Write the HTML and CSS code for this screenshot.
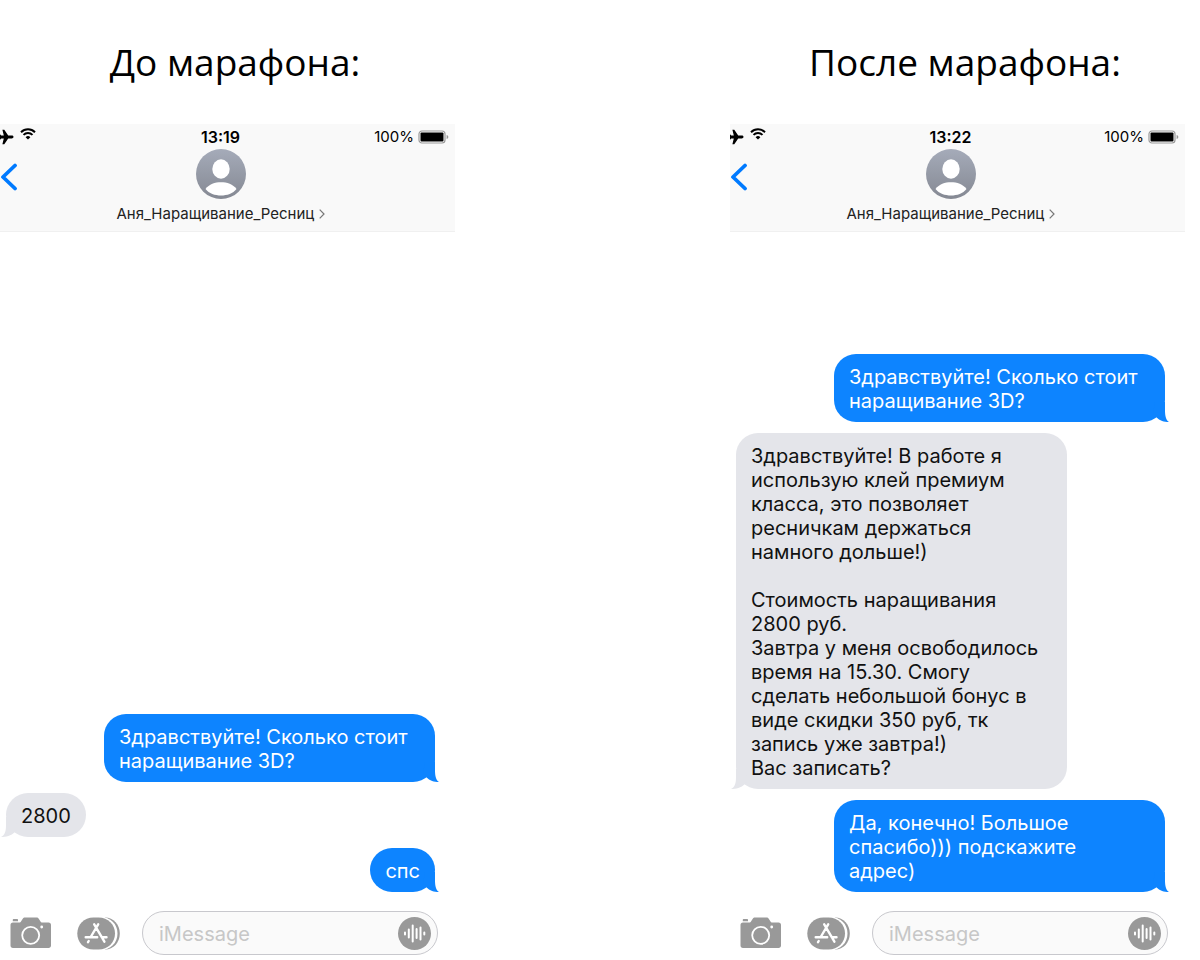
FILE: index.html
```html
<!DOCTYPE html>
<html lang="ru">
<head>
    <meta charset="UTF-8">
    <meta name="viewport" content="width=device-width, initial-scale=1.0">
    <title>До и после марафона</title>
    <link rel="stylesheet" href="styles.css">
</head>
<body>
    <!-- Общие иконки -->
    <svg class="icons" aria-hidden="true">
        <symbol id="icon-plane" viewBox="0 0 16 16">
            <path d="M15.500 8c0-.9-.8-1.400-1.800-1.400H10.200L6.300.8H4.400l1.400 5.800H3.200L1.600 4.800H0L1.200 8 0 11.200h1.600l1.600-1.800h2.600l-1.400 5.800h1.900l3.900-5.800h3.500c1 0 1.800-.5 1.800-1.400z"/>
        </symbol>
        <symbol id="icon-wifi" viewBox="0 0 16 12">
            <path d="M1 4.200a10 10 0 0 1 14 0M3.500 6.900a6.400 6.400 0 0 1 9 0" fill="none" stroke="#000" stroke-width="2"/>
            <path d="M8 11.600 5.600 9.200a3.400 3.400 0 0 1 4.800 0z"/>
        </symbol>
        <symbol id="icon-battery" viewBox="0 0 31 14">
            <rect x="1" y="1" width="26" height="12" rx="3" fill="#fff" stroke="#999" stroke-width="1.200"/>
            <rect x="2.500" y="2.500" width="23" height="9" rx="1"/>
            <path d="M28.600 5v4c1-.3 1.700-1 1.700-2s-.7-1.700-1.700-2z" fill="#999"/>
        </symbol>
        <symbol id="icon-back" viewBox="0 0 18 28">
            <path d="M15 2.500 3 14l12 11.500" fill="none" stroke="#007aff" stroke-width="3.800" stroke-linecap="round" stroke-linejoin="round"/>
        </symbol>
        <linearGradient id="avatar-fill" x2="0" y2="1">
            <stop offset="0" stop-color="#a5abb9"/>
            <stop offset="1" stop-color="#858993"/>
        </linearGradient>
        <symbol id="icon-avatar" viewBox="0 0 50 50">
            <circle cx="25" cy="25" r="25" fill="url(#avatar-fill)"/>
            <ellipse cx="25" cy="20" rx="8.700" ry="9.700" fill="#fff"/>
            <path d="M9.500 40C13 35 19 33.200 25 33.200S37 35 40.500 40C37 44.500 31 46.500 25 46.500S13 44.500 9.500 40z" fill="#fff"/>
        </symbol>
        <symbol id="icon-more" viewBox="0 0 6 10">
            <path d="M.7.700 5 5 .7 9.300" fill="none" stroke="#777" stroke-width="1.200"/>
        </symbol>
        <symbol id="icon-camera" viewBox="0 0 42 32">
            <path d="M3.500 2h3.800q.7 0 .7.700v1.500H2.800V2.700Q2.800 2 3.500 2zM3 5.500h6c1.300 0 1.600-.5 2.300-1.600l1.300-2C13.300.8 14 .5 15 .5h11.500c1 0 1.700.3 2.400 1.400l1.300 2c.7 1.100 1 1.600 2.300 1.600H38.500c1.600 0 2.500.9 2.500 2.500v20.500c0 1.600-.9 2.500-2.500 2.500H3C1.400 31 .5 30.100.5 28.500V8C.5 6.400 1.400 5.500 3 5.500z" fill="#999"/>
            <circle cx="20.700" cy="18.300" r="8.500" fill="none" stroke="#fff" stroke-width="1.800"/>
            <circle cx="31.700" cy="10" r="1.400" fill="#fff"/>
        </symbol>
        <symbol id="icon-apps" viewBox="0 0 43 33">
            <path d="M28 .5c8.500 0 14.800 7 14.800 16S36.500 32.500 28 32.500z" fill="#999"/>
            <path d="M24 0c9.300 0 16.500 7 16.500 16.500S33.300 33 24 33z" fill="#fff"/>
            <path d="M16.500.5h5C31 .5 38 7.500 38 16.500s-7 16-16.500 16h-5C7 32.500.3 25.500.3 16.500S7 .5 16.500.5z" fill="#999"/>
            <path d="M17.200 7.300 27.400 24.700M21.200 7.300 13.700 20M11.700 24l-.7 1.200M8.700 20.300h11.500M24.800 20.300h4.700" fill="none" stroke="#fff" stroke-width="2.400" stroke-linecap="round"/>
        </symbol>
        <symbol id="icon-voice" viewBox="0 0 33 33">
            <circle cx="16.500" cy="16.500" r="16.500" fill="#999"/>
            <path d="M7 15.500v2M10.800 12.500v8M14.700 8.500v16M18.600 12v9M22.500 10.500v12M26.300 15.500v2" fill="none" stroke="#fff" stroke-width="2" stroke-linecap="round"/>
        </symbol>
    </svg>

    <main class="compare">
        <section class="column">
            <h1>До марафона:</h1>
            <div class="phone">
                <header class="phone-header">
                    <div class="status-bar">
                        <div class="status-left">
                            <svg class="plane"><use href="#icon-plane"/></svg>
                            <svg class="wifi"><use href="#icon-wifi"/></svg>
                        </div>
                        <time>13:19</time>
                        <div class="status-right">
                            <span>100%</span>
                            <svg class="battery"><use href="#icon-battery"/></svg>
                        </div>
                    </div>
                    <div class="contact-row">
                        <button class="back" aria-label="Назад"><svg><use href="#icon-back"/></svg></button>
                        <a href="#" class="contact">
                            <svg class="avatar"><use href="#icon-avatar"/></svg>
                            <span class="name">Аня_Наращивание_Ресниц <svg class="more"><use href="#icon-more"/></svg></span>
                        </a>
                    </div>
                </header>
                <div class="messages">
                    <p class="message sent">Здравствуйте! Сколько стоит наращивание 3D?</p>
                    <p class="message received">2800</p>
                    <p class="message sent">спс</p>
                </div>
                <form class="input-bar">
                    <button type="button" class="camera" aria-label="Камера"><svg><use href="#icon-camera"/></svg></button>
                    <button type="button" class="apps" aria-label="Приложения"><svg><use href="#icon-apps"/></svg></button>
                    <div class="field">
                        <input type="text" placeholder="iMessage" aria-label="Сообщение">
                        <button type="button" class="voice" aria-label="Голосовое сообщение"><svg><use href="#icon-voice"/></svg></button>
                    </div>
                </form>
            </div>
        </section>

        <section class="column">
            <h1>После марафона:</h1>
            <div class="phone">
                <header class="phone-header">
                    <div class="status-bar">
                        <div class="status-left">
                            <svg class="plane"><use href="#icon-plane"/></svg>
                            <svg class="wifi"><use href="#icon-wifi"/></svg>
                        </div>
                        <time>13:22</time>
                        <div class="status-right">
                            <span>100%</span>
                            <svg class="battery"><use href="#icon-battery"/></svg>
                        </div>
                    </div>
                    <div class="contact-row">
                        <button class="back" aria-label="Назад"><svg><use href="#icon-back"/></svg></button>
                        <a href="#" class="contact">
                            <svg class="avatar"><use href="#icon-avatar"/></svg>
                            <span class="name">Аня_Наращивание_Ресниц <svg class="more"><use href="#icon-more"/></svg></span>
                        </a>
                    </div>
                </header>
                <div class="messages">
                    <p class="message sent">Здравствуйте! Сколько стоит наращивание 3D?</p>
                    <p class="message received">Здравствуйте! В работе я использую клей премиум класса, это позволяет ресничкам держаться намного дольше!)<br><br>Стоимость наращивания 2800&nbsp;руб.<br>Завтра у меня освободилось время на 15.30. Смогу сделать небольшой бонус в виде скидки 350 руб, тк запись уже завтра!)<br>Вас записать?</p>
                    <p class="message sent">Да, конечно! Большое спасибо))) подскажите<br>адрес)</p>
                </div>
                <form class="input-bar">
                    <button type="button" class="camera" aria-label="Камера"><svg><use href="#icon-camera"/></svg></button>
                    <button type="button" class="apps" aria-label="Приложения"><svg><use href="#icon-apps"/></svg></button>
                    <div class="field">
                        <input type="text" placeholder="iMessage" aria-label="Сообщение">
                        <button type="button" class="voice" aria-label="Голосовое сообщение"><svg><use href="#icon-voice"/></svg></button>
                    </div>
                </form>
            </div>
        </section>
    </main>
</body>
</html>
```

FILE: styles.css
```css
* {
    box-sizing: border-box;
}

body {
    margin: 0;
    background-color: #ffffff;
    color: #000000;
    font-family: Inter, "Liberation Sans", sans-serif;
}

.icons {
    position: absolute;
    width: 0;
    height: 0;
}

button {
    padding: 0;
    border: none;
    background: none;
    cursor: pointer;
}

button svg {
    display: block;
    width: 100%;
    height: 100%;
}

.compare {
    display: grid;
    grid-template-columns: minmax(0, 1fr) minmax(0, 1fr);
    column-gap: 275px;
    min-height: 100vh;
    padding-right: 15px;
}

.column {
    display: flex;
    flex-direction: column;
}

h1 {
    margin: 0;
    padding: 35px 0 35px 15px;
    font-family: "Open Sans", "Noto Sans", sans-serif;
    font-size: 37px;
    font-weight: 400;
    line-height: 54px;
    text-align: center;
}

.phone {
    flex-grow: 1;
    display: flex;
    flex-direction: column;
    overflow: hidden;
}

/* Шапка */
.phone-header {
    height: 108px;
    padding-right: 6px;
    background-color: #f9f9f9;
    border-bottom: 1px solid #f0f0f0;
}

.status-bar,
.contact-row {
    display: grid;
    grid-template-columns: 112px 1fr 120px;
}

.status-bar {
    height: 25px;
    align-items: center;
    font-size: 15px;
}

.status-left {
    display: flex;
    align-items: center;
    gap: 6px;
}

.plane {
    width: 16px;
    height: 16px;
    margin-left: -2px;
}

.wifi {
    width: 16px;
    height: 12px;
    margin-bottom: 5px;
}

.status-bar time {
    font-size: 16px;
    font-weight: 600;
    text-align: center;
}

.status-right {
    display: flex;
    align-items: center;
    justify-content: flex-end;
    gap: 4px;
}

.battery {
    width: 31px;
    height: 14px;
}

.back {
    width: 18px;
    height: 28px;
    margin-top: 14px;
}

.contact {
    display: flex;
    flex-direction: column;
    align-items: center;
    gap: 5px;
    color: #222222;
    text-decoration: none;
    white-space: nowrap;
}

.avatar {
    width: 50px;
    height: 50px;
}

.name {
    font-size: 15px;
    line-height: 20px;
}

.more {
    width: 6px;
    height: 10px;
}

/* Сообщения */
.messages {
    flex-grow: 1;
    display: flex;
    flex-direction: column;
    justify-content: flex-end;
    align-items: flex-start;
    gap: 11px;
    padding: 12px 20px 19px 6px;
}

.message {
    position: relative;
    max-width: 331px;
    margin: 0;
    padding: 11px 15px 9px;
    border-radius: 22px;
    font-size: 20px;
    line-height: 24px;
}

.message::after {
    content: '';
    position: absolute;
    bottom: 0;
    width: 20px;
    height: 20px;
    background-color: inherit;
}

.sent {
    align-self: flex-end;
    background-color: #0d84ff;
    color: #ffffff;
}

.sent::after {
    right: -4px;
    clip-path: path("M6 0H16V8C16 14 17 18 20 20C15 20 11 19 7 15L4 12Z");
}

.received {
    background-color: #e4e5ea;
    color: #111111;
}

.received::after {
    left: -5px;
    clip-path: path("M14 0H5V8C5 14 4 18 0 20C5 20 10 19 14 15L16 12Z");
}

/* Поле ввода */
.input-bar {
    display: flex;
    align-items: center;
    padding: 0 17px 5px 10px;
}

.camera {
    flex-shrink: 0;
    width: 42px;
    height: 32px;
    margin-right: 25px;
}

.apps {
    flex-shrink: 0;
    width: 43px;
    height: 33px;
    margin-right: 22px;
}

.field {
    flex-grow: 1;
    min-width: 0;
    display: flex;
    align-items: center;
    height: 44px;
    padding: 0 6px 0 16px;
    border: 1px solid #c8c8cd;
    border-radius: 22px;
    background-color: #fafafa;
}

.field input {
    flex-grow: 1;
    min-width: 0;
    padding: 2px 0 0;
    border: none;
    outline: none;
    background: none;
    font-family: inherit;
    font-size: 20px;
}

.field input::placeholder {
    color: #c7c7c7;
}

.voice {
    flex-shrink: 0;
    width: 33px;
    height: 33px;
}
```
